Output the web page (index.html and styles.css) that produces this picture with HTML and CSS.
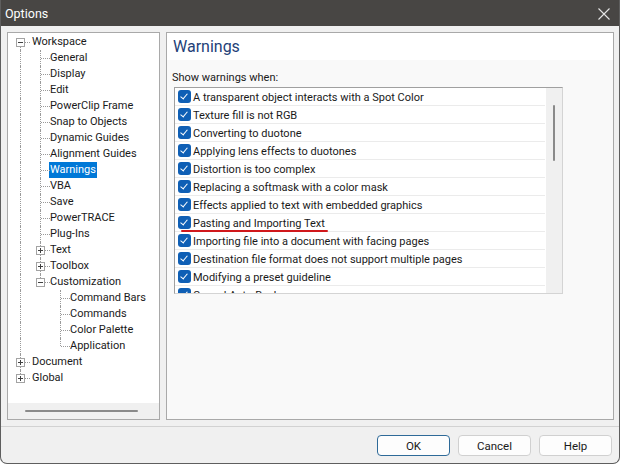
FILE: index.html
```html
<!DOCTYPE html>
<html>
<head>
<meta charset="utf-8">
<title>Options</title>
<link rel="stylesheet" href="styles.css">
</head>
<body>
<div class="window">
  <div class="titlebar">
    <span class="title">Options</span>
    <svg class="close" width="12" height="12" viewBox="0 0 12 12"><path d="M0.5 0.5 L11.5 11.5 M11.5 0.5 L0.5 11.5" stroke="#e6e6e6" stroke-width="1.1" fill="none"/></svg>
  </div>
  <div class="content">
    <div class="treepanel">
      <div class="tree">
        <div class="row root"><span class="g box vdown"><span class="exp minus"></span></span><span class="label">Workspace</span></div>
        <div class="row"><span class="g pipe"></span><span class="g tee"></span><span class="label">General</span></div>
        <div class="row"><span class="g pipe"></span><span class="g tee"></span><span class="label">Display</span></div>
        <div class="row"><span class="g pipe"></span><span class="g tee"></span><span class="label">Edit</span></div>
        <div class="row"><span class="g pipe"></span><span class="g tee"></span><span class="label">PowerClip Frame</span></div>
        <div class="row"><span class="g pipe"></span><span class="g tee"></span><span class="label">Snap to Objects</span></div>
        <div class="row"><span class="g pipe"></span><span class="g tee"></span><span class="label">Dynamic Guides</span></div>
        <div class="row"><span class="g pipe"></span><span class="g tee"></span><span class="label">Alignment Guides</span></div>
        <div class="row"><span class="g pipe"></span><span class="g tee"></span><span class="label sel">Warnings</span></div>
        <div class="row"><span class="g pipe"></span><span class="g tee"></span><span class="label">VBA</span></div>
        <div class="row"><span class="g pipe"></span><span class="g tee"></span><span class="label">Save</span></div>
        <div class="row"><span class="g pipe"></span><span class="g tee"></span><span class="label">PowerTRACE</span></div>
        <div class="row"><span class="g pipe"></span><span class="g tee"></span><span class="label">Plug-Ins</span></div>
        <div class="row"><span class="g pipe"></span><span class="g box vboth"><span class="exp plus"></span></span><span class="label">Text</span></div>
        <div class="row"><span class="g pipe"></span><span class="g box vboth"><span class="exp plus"></span></span><span class="label">Toolbox</span></div>
        <div class="row"><span class="g pipe"></span><span class="g box vup"><span class="exp minus"></span></span><span class="label">Customization</span></div>
        <div class="row"><span class="g pipe"></span><span class="g"></span><span class="g tee"></span><span class="label">Command Bars</span></div>
        <div class="row"><span class="g pipe"></span><span class="g"></span><span class="g tee"></span><span class="label">Commands</span></div>
        <div class="row"><span class="g pipe"></span><span class="g"></span><span class="g tee"></span><span class="label">Color Palette</span></div>
        <div class="row"><span class="g pipe"></span><span class="g"></span><span class="g elbow"></span><span class="label">Application</span></div>
        <div class="row root"><span class="g box vboth"><span class="exp plus"></span></span><span class="label">Document</span></div>
        <div class="row root"><span class="g box vup"><span class="exp plus"></span></span><span class="label">Global</span></div>
      </div>
      <div class="hscroll"><span class="hthumb"></span></div>
    </div>
    <div class="pagepanel">
      <div class="pagehead">Warnings</div>
      <div class="pagebody">
        <div class="caption">Show warnings when:</div>
        <div class="list">
          <div class="items">
            <div class="item"><span class="cb"></span><span class="itext">A transparent object interacts with a Spot Color</span></div>
            <div class="item"><span class="cb"></span><span class="itext">Texture fill is not RGB</span></div>
            <div class="item"><span class="cb"></span><span class="itext">Converting to duotone</span></div>
            <div class="item"><span class="cb"></span><span class="itext">Applying lens effects to duotones</span></div>
            <div class="item"><span class="cb"></span><span class="itext">Distortion is too complex</span></div>
            <div class="item"><span class="cb"></span><span class="itext">Replacing a softmask with a color mask</span></div>
            <div class="item"><span class="cb"></span><span class="itext">Effects applied to text with embedded graphics</span></div>
            <div class="item marked"><span class="cb"></span><span class="itext">Pasting and Importing Text</span><span class="redline"></span></div>
            <div class="item"><span class="cb"></span><span class="itext">Importing file into a document with facing pages</span></div>
            <div class="item"><span class="cb"></span><span class="itext">Destination file format does not support multiple pages</span></div>
            <div class="item"><span class="cb"></span><span class="itext">Modifying a preset guideline</span></div>
            <div class="item"><span class="cb"></span><span class="itext">Cancel Auto-Backup</span></div>
          </div>
          <div class="vscroll"><span class="vthumb"></span></div>
        </div>
      </div>
    </div>
  </div>
  <div class="separator"></div>
  <div class="footer">
    <button class="btn default">OK</button>
    <button class="btn">Cancel</button>
    <button class="btn">Help</button>
  </div>
</div>
</body>
</html>
```
FILE: styles.css
```css
html, body {
  margin: 0;
  padding: 0;
  background: #ffffff;
}
body {
  font-family: Roboto, "Noto Sans", sans-serif;
  font-size: 11px;
  color: #1a1a1a;
}
.window {
  width: 620px;
  height: 464px;
  box-sizing: border-box;
  background: #f0f0f0;
  border: 1px solid #5e5e5e;
  border-top: none;
  border-radius: 0 0 7px 7px;
  overflow: hidden;
}
.titlebar {
  height: 26px;
  background: #484644;
  display: flex;
  align-items: center;
  justify-content: space-between;
  padding: 0 10px 0 5px;
  margin: 0 -1px;
}
.title {
  color: #ffffff;
  font-size: 12.5px;
}
.close {
  display: block;
  margin-top: 1px;
}
.content {
  display: flex;
  gap: 6px;
  padding: 6px 5px 0 6px;
}
.treepanel {
  width: 153px;
  height: 388px;
  box-sizing: border-box;
  border: 1px solid #a9a9a9;
  background: #ffffff;
  display: flex;
  flex-direction: column;
}
.tree {
  flex: 1;
  overflow: hidden;
  padding: 1px 0 0 2px;
}
.row {
  display: flex;
  align-items: center;
  height: 16px;
  white-space: nowrap;
}
.g {
  flex: none;
  width: 20px;
  height: 16px;
  position: relative;
}
.g.pipe::before,
.g.tee::before,
.g.elbow::before,
.g.box::before {
  content: "";
  position: absolute;
  left: 10px;
  top: 0;
  height: 16px;
  border-left: 1px dotted #9a9a9a;
}
.g.elbow::before { height: 8px; }
.g.box.vdown::before { top: 12px; height: 4px; }
.g.box.vup::before { top: 0; height: 4px; }
.g.tee::after,
.g.elbow::after,
.g.box::after {
  content: "";
  position: absolute;
  left: 11px;
  right: 0;
  top: 8px;
  border-top: 1px dotted #9a9a9a;
}
.g.box::after { left: 15px; }
.exp {
  position: absolute;
  left: 6px;
  top: 4px;
  width: 9px;
  height: 9px;
  box-sizing: border-box;
  border: 1px solid #a3a3a3;
  background: #ffffff;
  z-index: 1;
}
.exp::before {
  content: "";
  position: absolute;
  left: 1px;
  top: 3px;
  width: 5px;
  height: 1px;
  background: #404040;
}
.exp.plus::after {
  content: "";
  position: absolute;
  left: 3px;
  top: 1px;
  width: 1px;
  height: 5px;
  background: #404040;
}
.label {
  margin-left: -1px;
  padding: 0 1px;
  line-height: 16px;
}
.root .label { margin-left: 1px; }
.label.sel {
  background: #0078d7;
  color: #ffffff;
}
.hscroll {
  height: 16px;
  background: #f0f0f0;
  display: flex;
  align-items: center;
}
.hthumb {
  margin-left: 17px;
  width: 113px;
  height: 2px;
  border-radius: 1px;
  background: #8a8a8a;
}
.pagepanel {
  width: 448px;
  height: 388px;
  box-sizing: border-box;
  border: 1px solid #a9a9a9;
  background: #f9f9f9;
  display: flex;
  flex-direction: column;
}
.pagehead {
  height: 27px;
  background: #ffffff;
  display: flex;
  align-items: center;
  padding-left: 6px;
  font-size: 16px;
  color: #233f78;
}
.pagebody {
  padding-left: 5px;
}
.caption {
  margin-top: 10px;
  line-height: 16px;
}
.list {
  margin: 1px 0 0 2px;
  width: 389px;
  height: 207px;
  box-sizing: border-box;
  border: 1px solid #a0a0a0;
  border-right-color: #d4d4d4;
  border-bottom-color: #d4d4d4;
  background: #ffffff;
  display: flex;
}
.items {
  flex: 1;
  overflow: hidden;
}
.item {
  height: 18px;
  box-sizing: border-box;
  border-bottom: 1px solid #ebebeb;
  display: flex;
  align-items: center;
  padding-left: 3px;
  white-space: nowrap;
  position: relative;
  margin-right: 1px;
}
.cb {
  flex: none;
  width: 13px;
  height: 13px;
  border-radius: 3px;
  background: #0f5fb5;
  margin-right: 2px;
  position: relative;
}
.cb::after {
  content: "";
  position: absolute;
  left: 4px;
  top: 2px;
  width: 3px;
  height: 6px;
  border-right: 1.2px solid #ffffff;
  border-bottom: 1.2px solid #ffffff;
  transform: rotate(40deg);
}
.itext {
  line-height: 16px;
  padding-top: 2px;
}
.redline {
  position: absolute;
  left: 6px;
  top: 16px;
  width: 147px;
  height: 2px;
  border-radius: 1px;
  background: #d0181c;
}
.vscroll {
  flex: none;
  width: 16px;
  background: #f0f0f0;
  display: flex;
  flex-direction: column;
}
.vthumb {
  margin: 17px 0 0 7px;
  width: 2px;
  height: 56px;
  border-radius: 1px;
  background: #8a8a8a;
}
.separator {
  margin-top: 6px;
  height: 1px;
  background: #d2d2d2;
}
.footer {
  display: flex;
  justify-content: flex-end;
  gap: 8px;
  padding: 8px 7px 0 0;
}
.btn {
  width: 73px;
  height: 21px;
  box-sizing: border-box;
  border: 1px solid #d0d0d0;
  border-radius: 4px;
  background: #fdfdfd;
  font-family: Roboto, "Noto Sans", sans-serif;
  font-size: 11.5px;
  color: #1a1a1a;
  padding: 0;
}
.btn.default {
  border-color: #2e6a98;
}
```
